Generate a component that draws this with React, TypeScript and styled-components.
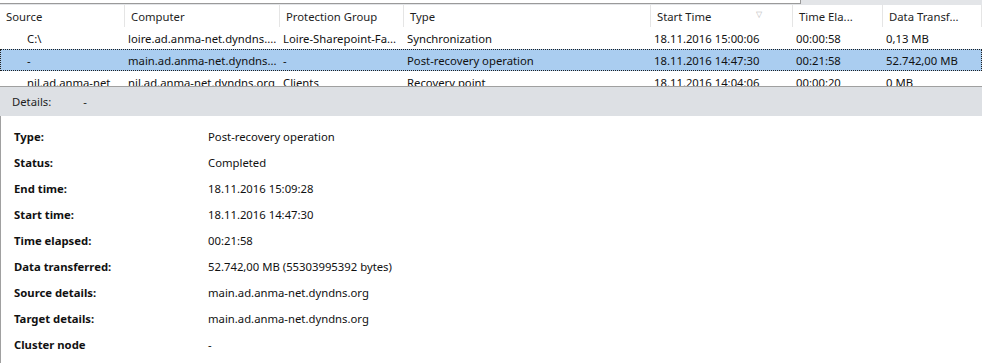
import React from 'react';
import styled, { createGlobalStyle } from 'styled-components';

const GlobalStyle = createGlobalStyle`
  html, body {
    margin: 0;
    padding: 0;
    background: #ffffff;
  }
  body {
    font-family: 'Noto Sans', 'Segoe UI', Arial, sans-serif;
    font-size: 11.3px;
    color: #000;
  }
`;

const COLUMNS = '125px 155px 124px 247px 142px 90px 1fr';

const Window = styled.div`
  width: 982px;
  height: 363px;
  display: flex;
  flex-direction: column;
  overflow: hidden;
  background: #fff;
`;

const TopStrip = styled.div`
  height: 5px;
  background: #e3e5e8;
  display: flex;
`;

const SearchBox = styled.div`
  width: 800px;
  height: 3px;
  background: #fff;
  border-right: 1px solid #9a9a9a;
  border-bottom: 1px solid #9a9a9a;
`;

const ListView = styled.div`
  height: 81px;
  overflow: hidden;
  border-bottom: 1px solid #a0a0a0;
`;

const HeaderRow = styled.div`
  display: grid;
  grid-template-columns: ${COLUMNS};
  height: 22px;
`;

const HeaderCell = styled.div`
  display: flex;
  align-items: center;
  gap: 45px;
  padding-left: 6px;
  border-right: 1px solid #e5e5e5;
  white-space: nowrap;
  overflow: hidden;
  color: #1e1e1e;
`;

const SortGlyph = styled.span`
  color: #b8b8b8;
  font-size: 8px;
  margin-top: -5px;
`;

const Row = styled.div<{ $selected?: boolean }>`
  display: grid;
  grid-template-columns: ${COLUMNS};
  height: 22px;
  box-sizing: border-box;
  background: ${p => (p.$selected ? '#aacdf0' : 'transparent')};
  outline: ${p => (p.$selected ? '1px dotted #202020' : 'none')};
  outline-offset: -1px;
`;

const Cell = styled.div<{ $indent?: boolean }>`
  line-height: 23px;
  padding-left: ${p => (p.$indent ? '27px' : '3px')};
  white-space: nowrap;
  overflow: hidden;
  color: #111;
`;

const DetailsBar = styled.div`
  height: 29px;
  background: #dde0e4;
  display: flex;
  align-items: center;
  padding-left: 12px;
  gap: 32px;
  color: #1e1e1e;
`;

const DetailsPanel = styled.div`
  flex: 1;
  border-left: 1px solid #a0a0a0;
  padding: 7px 0 0 13px;
  display: grid;
  grid-template-columns: 194px 1fr;
  grid-auto-rows: 26px;
  align-items: center;
`;

const Label = styled.div`
  font-weight: bold;
  color: #111;
`;

const Value = styled.div`
  color: #111;
`;

const headers = ['Source', 'Computer', 'Protection Group', 'Type', 'Start Time', 'Time Ela...', 'Data Transf...'];

// cell text as the list view shows it, already truncated to the column widths
const rows = [
  ['C:\\', 'loire.ad.anma-net.dyndns....', 'Loire-Sharepoint-Fa...', 'Synchronization', '18.11.2016 15:00:06', '00:00:58', '0,13 MB'],
  ['-', 'main.ad.anma-net.dyndns...', '-', 'Post-recovery operation', '18.11.2016 14:47:30', '00:21:58', '52.742,00 MB'],
  ['nil.ad.anma-net', 'nil.ad.anma-net.dyndns.org', 'Clients', 'Recovery point', '18.11.2016 14:04:06', '00:00:20', '0 MB'],
];

const details: [string, string][] = [
  ['Type:', 'Post-recovery operation'],
  ['Status:', 'Completed'],
  ['End time:', '18.11.2016 15:09:28'],
  ['Start time:', '18.11.2016 14:47:30'],
  ['Time elapsed:', '00:21:58'],
  ['Data transferred:', '52.742,00 MB (55303995392 bytes)'],
  ['Source details:', 'main.ad.anma-net.dyndns.org'],
  ['Target details:', 'main.ad.anma-net.dyndns.org'],
  ['Cluster node', '-'],
];

const App = (): JSX.Element => {
  return (
    <>
      <GlobalStyle />
      <Window>
        <TopStrip>
          <SearchBox />
        </TopStrip>
        <ListView>
          <HeaderRow>
            {headers.map(h => (
              <HeaderCell key={h}>
                {h}
                {h === 'Start Time' && <SortGlyph>▽</SortGlyph>}
              </HeaderCell>
            ))}
          </HeaderRow>
          {rows.map((r, i) => (
            <Row key={i} $selected={i === 1}>
              {r.map((c, j) => (
                <Cell key={j} $indent={j === 0}>
                  {c}
                </Cell>
              ))}
            </Row>
          ))}
        </ListView>
        <DetailsBar>
          <span>Details:</span>
          <span>-</span>
        </DetailsBar>
        <DetailsPanel>
          {details.map(([l, v]) => (
            <React.Fragment key={l}>
              <Label>{l}</Label>
              <Value>{v}</Value>
            </React.Fragment>
          ))}
        </DetailsPanel>
      </Window>
    </>
  );
};

export default App;
